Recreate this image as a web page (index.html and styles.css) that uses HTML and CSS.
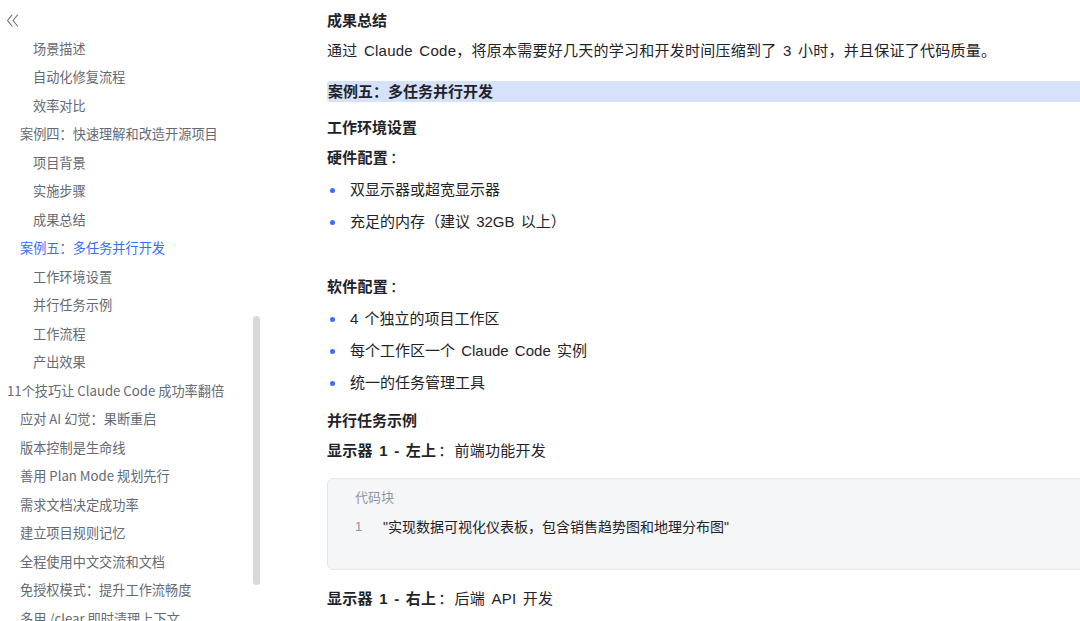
FILE: index.html
```html
<!DOCTYPE html>
<html lang="zh-CN">
<head>
    <meta charset="UTF-8">
    <title>多任务并行开发</title>
    <link rel="stylesheet" href="styles.css">
</head>
<body>

<div class="page">
    <aside class="sidebar">
        <div class="toc">
            <div class="collapse">
                <svg width="13" height="13" viewBox="0 0 13 13" fill="none" stroke="#646a73" stroke-width="1.1" stroke-linecap="round" stroke-linejoin="round">
                    <path d="M6 1 L1.5 6.5 L6 12"/>
                    <path d="M11.5 1 L7 6.5 L11.5 12"/>
                </svg>
            </div>
            <ul class="toc-list">
                <li class="lv3">场景描述</li>
                <li class="lv3">自动化修复流程</li>
                <li class="lv3">效率对比</li>
                <li class="lv2">案例四：快速理解和改造开源项目</li>
                <li class="lv3">项目背景</li>
                <li class="lv3">实施步骤</li>
                <li class="lv3">成果总结</li>
                <li class="lv2 active">案例五：多任务并行开发</li>
                <li class="lv3">工作环境设置</li>
                <li class="lv3">并行任务示例</li>
                <li class="lv3">工作流程</li>
                <li class="lv3">产出效果</li>
                <li class="lv1">11个技巧让 Claude Code 成功率翻倍</li>
                <li class="lv2">应对 AI 幻觉：果断重启</li>
                <li class="lv2">版本控制是生命线</li>
                <li class="lv2">善用 Plan Mode 规划先行</li>
                <li class="lv2">需求文档决定成功率</li>
                <li class="lv2">建立项目规则记忆</li>
                <li class="lv2">全程使用中文交流和文档</li>
                <li class="lv2">免授权模式：提升工作流畅度</li>
                <li class="lv2">多用 /clear 即时清理上下文</li>
            </ul>
        </div>
        <div class="scroll-track">
            <div class="scroll-thumb"></div>
        </div>
    </aside>

    <main class="doc">
        <h4 class="h-sub first">成果总结</h4>
        <p class="para">通过 Claude Code，将原本需要好几天的学习和开发时间压缩到了 3 小时，并且保证了代码质量。</p>

        <h3 class="h-case"><span>案例五：多任务并行开发</span></h3>

        <h4 class="h-sub">工作环境设置</h4>
        <p class="para label"><b>硬件配置</b><span class="colon">：</span></p>
        <ul class="bullets">
            <li>双显示器或超宽显示器</li>
            <li>充足的内存（建议 32GB 以上）</li>
        </ul>

        <p class="para label gap"><b>软件配置</b><span class="colon">：</span></p>
        <ul class="bullets">
            <li>4 个独立的项目工作区</li>
            <li>每个工作区一个 Claude Code 实例</li>
            <li>统一的任务管理工具</li>
        </ul>

        <h4 class="h-sub">并行任务示例</h4>
        <p class="para label tight"><b>显示器 1 - 左上</b><span class="colon">：</span>前端功能开发</p>

        <div class="code-block">
            <div class="code-title">代码块</div>
            <div class="code-line">
                <span class="line-no">1</span>
                <span class="code-text">"实现数据可视化仪表板，包含销售趋势图和地理分布图"</span>
            </div>
        </div>

        <p class="para label after-code"><b>显示器 1 - 右上</b><span class="colon">：</span>后端 API 开发</p>
    </main>
</div>

</body>
</html>
```

FILE: styles.css
```css
body {
    margin: 0;
    padding: 0;
    background: #fff;
    color: #1f2329;
    font-family: "Noto Sans CJK SC", "Noto Sans", sans-serif;
    overflow: hidden;
}
.page {
    display: flex;
    height: 621px;
    overflow: hidden;
}

/* sidebar / toc */
.sidebar {
    width: 262px;
    flex-shrink: 0;
    display: flex;
}
.toc {
    flex: 1;
    min-width: 0;
}
.collapse {
    height: 14px;
    padding: 14px 0 0 6px;
    line-height: 0;
}
.toc-list {
    list-style: none;
    margin: 6.75px 0 0;
    padding: 0;
}
.toc-list li {
    height: 28.5px;
    line-height: 28.5px;
    font-size: 13.2px;
    color: #646a73;
    white-space: nowrap;
}
.toc-list .lv1 { padding-left: 7px; }
.toc-list .lv2 { padding-left: 20px; }
.toc-list .lv3 { padding-left: 33px; }
.toc-list .active { color: #3370ff; }

.scroll-track {
    width: 7px;
    margin-right: 2px;
}
.scroll-thumb {
    margin-top: 316px;
    height: 269px;
    background: #d8d9db;
    border-radius: 4px;
}

/* document */
.doc {
    flex: 1;
    min-width: 0;
    padding-left: 65px;
    margin-right: -30px;
    font-family: "Liberation Sans", "Noto Sans CJK SC", sans-serif;
}
.doc p, .doc h3, .doc h4, .doc ul {
    margin: 0;
}
.h-sub {
    font-size: 15px;
    font-weight: 700;
    line-height: 24px;
    margin-top: 14px !important;
}
.h-sub.first {
    margin-top: 8.5px !important;
}
.para {
    font-size: 15px;
    line-height: 24px;
    word-spacing: 2px;
    letter-spacing: 0.25px;
    margin-top: 6px !important;
}
.label b {
    font-weight: 700;
}
.colon {
    margin-left: 2px;
    margin-right: 1px;
}
.label.gap {
    margin-top: 41px !important;
}
.label.tight {
    margin-top: 6px !important;
}
.label.after-code {
    margin-top: 17px !important;
}
.h-case {
    margin-top: 18px !important;
    font-size: 15px;
    font-weight: 700;
    line-height: 21px;
    background: #d6e2f9;
    border-radius: 3px;
    padding-left: 1px;
}
.bullets {
    list-style: none;
    padding: 0;
    margin-top: 8px !important;
}
.bullets li {
    position: relative;
    font-size: 15px;
    line-height: 24px;
    word-spacing: 2px;
    padding-left: 23px;
    margin-bottom: 8px;
}
.bullets li::before {
    content: "";
    position: absolute;
    left: 3px;
    top: 10px;
    width: 5px;
    height: 5px;
    border-radius: 50%;
    background: #3370ff;
}
.bullets + .h-sub {
    margin-top: 14px !important;
}

.code-block {
    margin-top: 15px;
    background: #f5f6f7;
    border: 1px solid #e4e6e9;
    border-radius: 6px;
    padding: 6px 0 30px 27px;
}
.code-title {
    font-size: 13px;
    line-height: 24px;
    color: #8f959e;
    font-family: "Noto Sans CJK SC", sans-serif;
}
.code-line {
    display: flex;
    margin-top: 6px;
    font-size: 14px;
    line-height: 24px;
}
.line-no {
    width: 28px;
    color: #8f959e;
    font-size: 13px;
}
.code-text {
    color: #1f2329;
}
```
